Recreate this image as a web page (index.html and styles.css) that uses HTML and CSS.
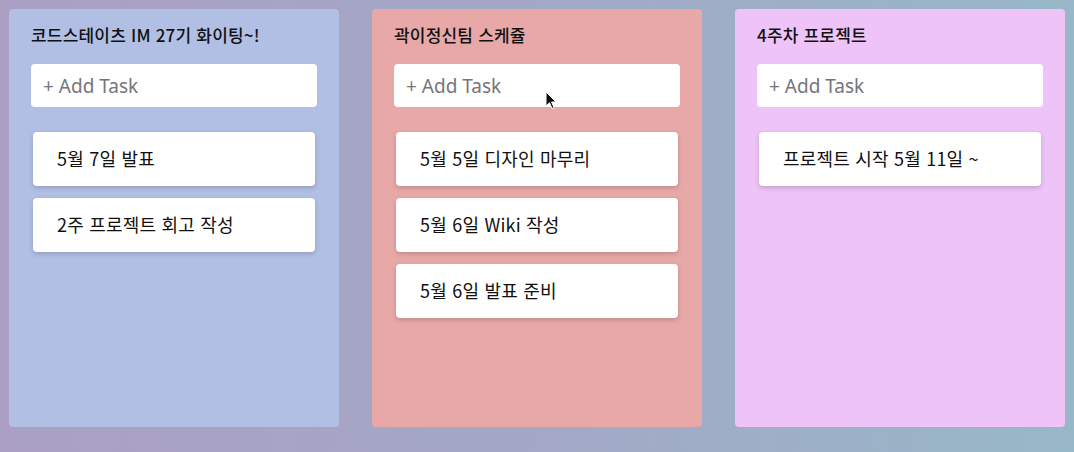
FILE: index.html
```html
<!DOCTYPE html>
<html lang="ko">
<head>
<meta charset="utf-8">
<title>Kanban</title>
<link rel="stylesheet" href="styles.css">
</head>
<body>
<div class="board">
  <section class="column col-blue">
    <h2 class="column-title">코드스테이츠 IM 27기 화이팅~!</h2>
    <input class="add-task" type="text" placeholder="+ Add Task">
    <ul class="cards">
      <li class="card">5월 7일 발표</li>
      <li class="card">2주 프로젝트 회고 작성</li>
    </ul>
  </section>
  <section class="column col-red">
    <h2 class="column-title">곽이정신팀 스케쥴</h2>
    <input class="add-task" type="text" placeholder="+ Add Task">
    <ul class="cards">
      <li class="card">5월 5일 디자인 마무리</li>
      <li class="card">5월 6일 Wiki 작성</li>
      <li class="card">5월 6일 발표 준비</li>
    </ul>
  </section>
  <section class="column col-pink">
    <h2 class="column-title">4주차 프로젝트</h2>
    <input class="add-task" type="text" placeholder="+ Add Task">
    <ul class="cards">
      <li class="card">프로젝트 시작 5월 11일 ~</li>
    </ul>
  </section>
</div>
<svg class="cursor" width="12" height="19" viewBox="0 0 12 19" aria-hidden="true">
  <path d="M1 1 L1 15 L4.5 11.8 L7 17.5 L9 16.6 L6.6 11 L11 11 Z" fill="#111" stroke="#fff" stroke-width="1"/>
</svg>
</body>
</html>
```
FILE: styles.css
```css
* { box-sizing: border-box; }
html, body { height: 100%; }
body {
  margin: 0;
  min-height: 452px;
  background: linear-gradient(90deg, #ab9fc4 0%, #a3a8c6 50%, #97b8c8 100%);
  font-family: "Noto Sans", "Noto Sans CJK KR", sans-serif;
  color: #111;
}
.board {
  display: flex;
  gap: 33px;
  padding: 9px;
  align-items: flex-start;
}
.column {
  width: 330px;
  height: 418px;
  border-radius: 4px;
  padding: 14px 22px 0;
  display: flex;
  flex-direction: column;
}
.col-blue { background: #b2bfe5; }
.col-red { background: #e8a8a8; }
.col-pink { background: #eec4f8; }
.column-title {
  margin: 0;
  font-family: "Noto Sans CJK KR", "Noto Sans", sans-serif;
  font-size: 17px;
  font-weight: 500;
  line-height: 24px;
  letter-spacing: 0.2px;
  color: #111;
}
.add-task {
  margin-top: 17px;
  width: 286px;
  height: 43px;
  border: none;
  border-radius: 4px;
  background: #fff;
  padding: 0 12px;
  font-family: "Noto Sans", "Noto Sans CJK KR", sans-serif;
  font-size: 19px;
  color: #333;
  outline: none;
}
.add-task::placeholder { color: #75757a; }
.cards {
  list-style: none;
  margin: 25px 2px 0;
  padding: 0;
  display: flex;
  flex-direction: column;
  gap: 12px;
}
.card {
  height: 54px;
  background: #fff;
  border-radius: 4px;
  padding: 0 24px 2px;
  display: flex;
  align-items: center;
  font-family: "Noto Sans CJK KR", "Noto Sans", sans-serif;
  font-size: 18px;
  letter-spacing: 0.2px;
  color: #111;
  box-shadow: 0 2px 5px rgba(0, 0, 0, 0.18);
}
.cursor {
  position: absolute;
  left: 545px;
  top: 91px;
}
```
